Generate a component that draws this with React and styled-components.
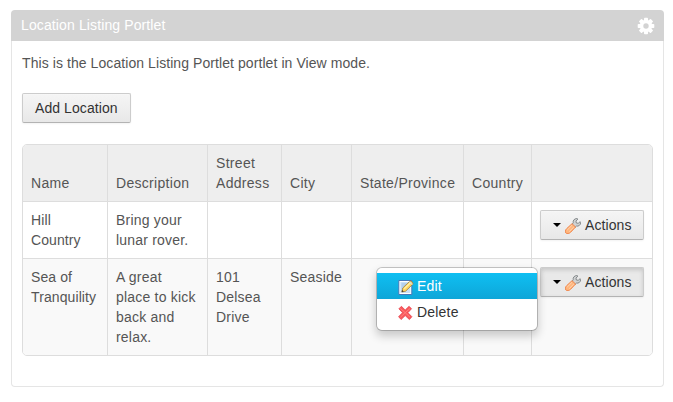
import React from 'react';
import styled, { createGlobalStyle, css } from 'styled-components';

const GlobalStyle = createGlobalStyle`
  *, *::before, *::after { box-sizing: border-box; }
  body {
    margin: 0;
    background: #fff;
    color: #555;
    font: 14px/20px "Liberation Sans", Arial, sans-serif;
  }
`;

const Portlet = styled.section`
  width: 653px;
  margin: 10px 0 0 11px;
`;

const Topper = styled.header`
  display: flex;
  align-items: center;
  justify-content: space-between;
  height: 31px;
  padding: 0 9px 0 10px;
  border-radius: 4px 4px 0 0;
  background: #d3d3d3;
  color: #fff;
`;

const Title = styled.h1`
  margin: -1px 0 0;
  font: inherit;
  letter-spacing: 0.12px;
`;

const Content = styled.div`
  height: 346px;
  padding: 12px 10px 0;
  border: 1px solid #e5e5e5;
  border-top: 0;
  border-radius: 0 0 4px 4px;
`;

const Intro = styled.p`
  margin: 0 0 20px;
  letter-spacing: 0.075px;
`;

const Button = styled.button`
  display: flex;
  align-items: center;
  height: 30px;
  padding: 0 12px;
  border: 1px solid #ccc;
  border-bottom-color: #b3b3b3;
  border-radius: 2px;
  background: linear-gradient(#f5f5f5, #e8e8e8);
  color: #333;
  font: inherit;
  letter-spacing: 0.08px;
  white-space: nowrap;
  box-shadow: inset 0 1px 0 rgba(255, 255, 255, 0.2), 0 1px 2px rgba(0, 0, 0, 0.05);
  ${(p) =>
    p.$open &&
    css`
      background: #e9e9e9;
      box-shadow: inset 0 2px 4px rgba(0, 0, 0, 0.15), 0 1px 2px rgba(0, 0, 0, 0.05);
    `}
`;

const Caret = styled.span`
  border: 4px solid transparent;
  border-top-color: #000;
  border-bottom: 0;
  margin-right: 4px;
`;

const ButtonIcon = styled.span`
  display: flex;
  margin-right: 4px;
  padding-top: 2px;
`;

const Table = styled.table`
  width: 631px;
  margin-top: 21px;
  table-layout: fixed;
  border: 1px solid #ddd;
  border-collapse: separate;
  border-spacing: 0;
  border-radius: 5px;
`;

const Col = styled.col`
  width: ${(p) => p.$width}px;
`;

const cell = css`
  padding: 8px;
  border-left: 1px solid #ddd;
  text-align: left;
  font-weight: normal;
  &:first-child { border-left: 0; }
`;

const HeadCell = styled.th`
  ${cell}
  background: #eee;
  vertical-align: bottom;
  letter-spacing: 0.3px;
  &:first-child { border-top-left-radius: 4px; }
  &:last-child { border-top-right-radius: 4px; }
`;

const Cell = styled.td`
  ${cell}
  border-top: 1px solid #ddd;
  vertical-align: top;
  letter-spacing: 0.2px;
  &:first-child { letter-spacing: 0.1px; }
`;

const Row = styled.tr`
  height: ${(p) => p.$height}px;
  background: ${(p) => (p.$striped ? '#f9f9f9' : '#fff')};
  &:last-child td:first-child { border-bottom-left-radius: 4px; }
  &:last-child td:last-child { border-bottom-right-radius: 4px; }
`;

const MenuAnchor = styled.div`
  position: relative;
  width: 104px;
`;

const Menu = styled.ul`
  position: absolute;
  top: 0;
  right: calc(100% + 2px);
  width: 162px;
  margin: 0;
  padding: 5px 0;
  list-style: none;
  border: 1px solid rgba(0, 0, 0, 0.2);
  border-radius: 6px;
  background: #fff;
  background-clip: padding-box;
  box-shadow: 0 5px 10px rgba(0, 0, 0, 0.2);
`;

const MenuItem = styled.li`
  display: flex;
  align-items: center;
  gap: 3px;
  height: 26px;
  padding: 0 20px 0 21px;
  color: ${(p) => (p.$active ? '#fff' : '#333')};
  background: ${(p) => (p.$active ? 'linear-gradient(#0fbff2, #0ea6d8)' : 'none')};
  svg { margin-top: 2px; }
`;

const Gear = () => (
  <svg width="18" height="18" viewBox="-9 -9 18 18" fill="#fff">
    {[0, 45, 90, 135].map((a) => (
      <rect key={a} x="-2" y="-8.3" width="4" height="16.6" rx="0.8" transform={`rotate(${a})`} />
    ))}
    <circle r="6.2" />
    <circle r="2.7" fill="#d3d3d3" />
  </svg>
);

const Wrench = () => (
  <svg width="16" height="16" viewBox="0 0 16 16">
    <path
      d="M7 6.4 8.2 4.8C7.6 2.6 9.4.6 11.9.5L12.9 1.1 11 3.1l.3 1.9 1.9.3 2-1.6.4 1c0 2.4-2 3.8-4.2 3.4L10 9.4Z"
      fill="#cfd2d3"
      stroke="#85898b"
      strokeWidth="1"
    />
    <path
      d="M7 5.7 10.6 9 5.6 14.3C4.2 15.8 2 16 .9 15S.3 11.9 1.6 10.7Z"
      fill="#ffb57c"
      stroke="#f08a52"
      strokeWidth="1"
    />
    <path d="M7 7.3 2.2 12.1M8.8 9 4.2 13.6" stroke="#ffd9b8" strokeWidth="0.9" />
  </svg>
);

const EditIcon = () => (
  <svg width="16" height="16" viewBox="0 0 16 16">
    <path d="M.8 1.5h13v14H.8z" fill="#fff" stroke="#4678b8" />
    <path d="M2.3 3h10v11h-10z" fill="#c9e0f6" />
    <path d="M3.5 5h5M3.5 7h4M3.5 9h2" stroke="#9ebfe2" />
    <path d="m3.8 13 .9-3.9 7-6.8c1.1-1 4.1 1.8 3 3l-7.1 6.9Z" fill="#ffd65e" stroke="#9b7b3b" strokeWidth="0.8" />
    <path d="m6.2 9.8 6.5-6.3" stroke="#fff1a8" strokeWidth="1.3" />
    <path d="m11.5 2.7 2.9 2.9" stroke="#d4d9dc" strokeWidth="1.2" />
    <path d="m3.8 13 .4-1.9 1.5 1.4Z" fill="#333" />
  </svg>
);

const DeleteIcon = () => (
  <svg width="16" height="16" viewBox="0 0 16 16">
    <path
      d="m.9 3.8 2.5-2.5L7.2 5l3.9-3.7 2.4 2.5-3.6 3.9 4 4-2.5 2.8-4.2-3.9-4.1 3.9-2.5-2.8 3.9-4Z"
      fill="#f9585b"
      stroke="#e64450"
      strokeWidth="0.8"
      strokeLinejoin="round"
    />
    <path d="m2.4 3.5 4.8 4.2L12 3.5M2.4 12.2l4.8-4.5 4.8 4.5" fill="none" stroke="#ff8380" strokeWidth="0.9" />
  </svg>
);

const columns = [
  { label: 'Name', width: 84 },
  { label: 'Description', width: 100 },
  { label: 'Street Address', width: 74 },
  { label: 'City', width: 70 },
  { label: 'State/Province', width: 112 },
  { label: 'Country', width: 68 },
  { label: '', width: 121 },
];

const locations = [
  { values: ['Hill Country', 'Bring your lunar rover.', '', '', '', ''], height: 57 },
  {
    values: ['Sea of Tranquility', 'A great place to kick back and relax.', '101 Delsea Drive', 'Seaside', '', ''],
    height: 97,
    open: true,
  },
];

function Actions({ open }) {
  return (
    <MenuAnchor>
      <Button $open={open}>
        <Caret />
        <ButtonIcon>
          <Wrench />
        </ButtonIcon>
        Actions
      </Button>
      {open && (
        <Menu>
          <MenuItem $active>
            <EditIcon />
            Edit
          </MenuItem>
          <MenuItem>
            <DeleteIcon />
            Delete
          </MenuItem>
        </Menu>
      )}
    </MenuAnchor>
  );
}

export default function App() {
  return (
    <>
      <GlobalStyle />
      <Portlet>
        <Topper>
          <Title>Location Listing Portlet</Title>
          <Gear />
        </Topper>
        <Content>
          <Intro>This is the Location Listing Portlet portlet in View mode.</Intro>
          <Button>Add Location</Button>
          <Table>
            <colgroup>
              {columns.map((c) => (
                <Col key={c.label} $width={c.width} />
              ))}
            </colgroup>
            <thead>
              <tr>
                {columns.map((c) => (
                  <HeadCell key={c.label}>{c.label}</HeadCell>
                ))}
              </tr>
            </thead>
            <tbody>
              {locations.map((l, i) => (
                <Row key={l.values[0]} $height={l.height} $striped={i % 2 === 1}>
                  {l.values.map((v, j) => (
                    <Cell key={j}>{v}</Cell>
                  ))}
                  <Cell>
                    <Actions open={l.open} />
                  </Cell>
                </Row>
              ))}
            </tbody>
          </Table>
        </Content>
      </Portlet>
    </>
  );
}
